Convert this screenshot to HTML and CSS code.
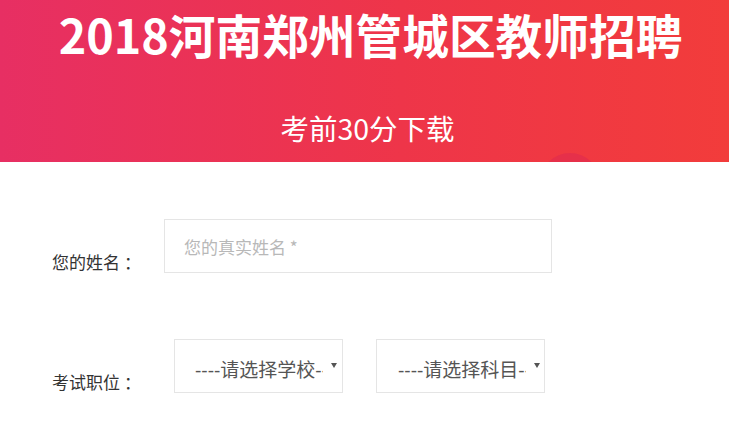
FILE: index.html
```html
<!DOCTYPE html>
<html lang="zh-CN">
<head>
    <meta charset="UTF-8">
    <meta name="viewport" content="width=device-width, initial-scale=1.0">
    <title>2018河南郑州管城区教师招聘</title>
    <link rel="stylesheet" href="styles.css">
</head>
<body>
    <div class="banner">
        <span class="banner-circle"></span>
        <h1>2018河南郑州管城区教师招聘</h1>
        <p class="sub">考前30分下载</p>
    </div>
    <form class="form" onsubmit="return false;">
        <div class="row">
            <label class="label" for="name">您的姓名<span class="colon">：</span></label>
            <input type="text" id="name" class="text-input" placeholder="您的真实姓名 *">
        </div>
        <div class="row row-select">
            <span class="label">考试职位<span class="colon">：</span></span>
            <div class="select select-first">
                <span class="select-text">----请选择学校----</span>
                <span class="arrow"></span>
            </div>
            <div class="select">
                <span class="select-text">----请选择科目----</span>
                <span class="arrow"></span>
            </div>
        </div>
    </form>
</body>
</html>
```

FILE: styles.css
```css
body {
    margin: 0;
    font-family: "Liberation Sans", "Noto Sans CJK SC", sans-serif;
    background: #fff;
}
.banner {
    position: relative;
    height: 162px;
    overflow: hidden;
    background: linear-gradient(90deg, #e72f63, #ee3549 55%, #f23c3b);
    color: #fff;
    text-align: center;
}
.banner-circle {
    position: absolute;
    left: 540px;
    top: 153px;
    width: 60px;
    height: 60px;
    border-radius: 50%;
    background: #e6304a;
}
.banner h1 {
    margin: 0;
    padding: 0 0 0 12px;
    font-family: "Noto Sans CJK SC", sans-serif;
    font-size: 46.7px;
    font-weight: bold;
    line-height: normal;
    white-space: nowrap;
}
.banner .sub {
    margin: 44px 0 0;
    padding-left: 6px;
    font-family: "Noto Sans CJK SC", sans-serif;
    font-size: 28.5px;
    line-height: 34px;
}
.form {
    padding: 57px 0 0 52px;
}
.row {
    display: flex;
    align-items: flex-end;
}
.row-select {
    margin-top: 66px;
}
.label {
    width: 112px;
    font-family: "Noto Sans CJK SC", sans-serif;
    font-size: 17px;
    line-height: 20px;
    color: #333;
    margin-bottom: 1px;
}
.colon {
    margin-left: 4px;
}
.text-input {
    box-sizing: border-box;
    width: 388px;
    height: 54px;
    margin: 0;
    padding: 0 0 0 19px;
    border: 1px solid #e5e5e5;
    font-family: "Noto Sans CJK SC", sans-serif;
    font-size: 17px;
    color: #333;
    outline: none;
}
.text-input::placeholder {
    color: #b8b8b8;
}
.select {
    box-sizing: border-box;
    display: flex;
    align-items: center;
    width: 169px;
    height: 54px;
    padding: 0 0 0 21px;
    border: 1px solid #e5e5e5;
    margin-left: 33px;
}
.select-first {
    margin-left: 10px;
    padding-left: 20px;
}
.select-text {
    flex: 0 0 128px;
    overflow: hidden;
    white-space: nowrap;
    padding-top: 4px;
    font-family: "Liberation Sans", "Noto Sans CJK SC", sans-serif;
    font-size: 19px;
    color: #555;
}
.arrow {
    width: 0;
    height: 0;
    margin-left: 8px;
    margin-bottom: 2px;
    border-left: 3px solid transparent;
    border-right: 3px solid transparent;
    border-top: 5px solid #555;
}
```
